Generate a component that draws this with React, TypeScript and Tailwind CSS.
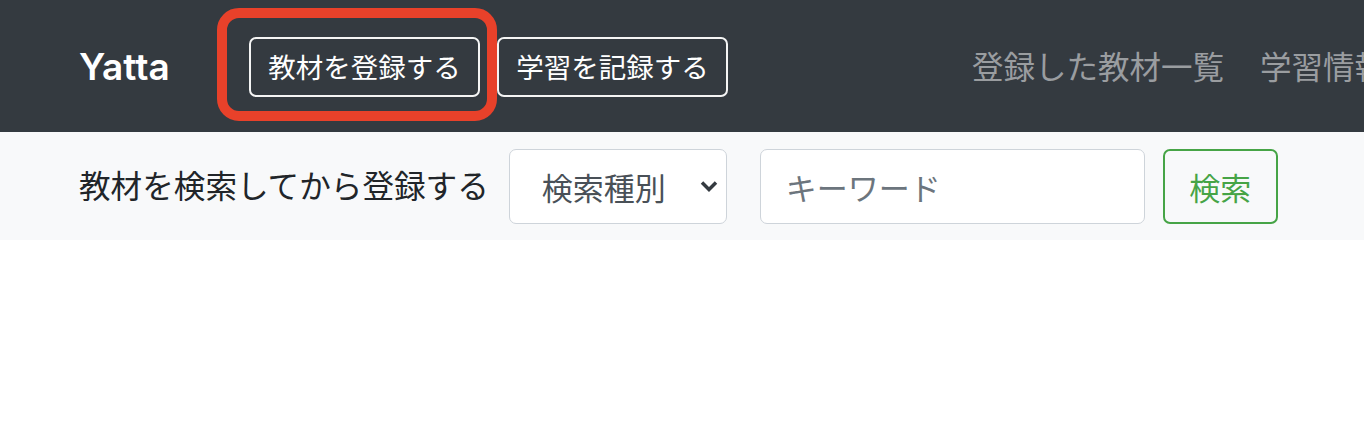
const jp = { fontFamily: '"Noto Sans CJK JP", "Noto Sans", sans-serif' };

function NavButton({ label }: { label: string }) {
  return (
    <button className="h-[60px] w-[231px] shrink-0 rounded-[7px] border-2 border-[#f4f4f4] text-[27.5px] text-white leading-none">
      {label}
    </button>
  );
}

export default function App() {
  return (
    <div className="min-h-[428px] bg-white" style={jp}>
      {/* navbar */}
      <nav className="relative flex h-[132px] items-center bg-[#343a40] pl-[79px] overflow-hidden">
        <span
          className="w-[138px] shrink-0 text-[37px] font-semibold text-white leading-none"
          style={{ fontFamily: 'Inter, "Liberation Sans", sans-serif' }}
        >
          Yatta
        </span>
        <div className="flex gap-[17px] pl-[32px] pt-[1px]">
          <NavButton label="教材を登録する" />
          <NavButton label="学習を記録する" />
        </div>
        <div className="ml-auto flex shrink-0 gap-[36px] pl-[244px] text-[31.5px] leading-none text-[#9a9da0] whitespace-nowrap">
          <a>登録した教材一覧</a>
          <a>学習情報</a>
        </div>
        {/* annotation highlight */}
        <div className="pointer-events-none absolute left-[217px] top-[8px] h-[113px] w-[280px] rounded-[22px] border-[10px] border-[#e8412a]" />
      </nav>

      {/* search bar */}
      <div className="flex h-[108px] items-center bg-[#f8f9fa] pl-[79px]">
        <span className="text-[31.6px] leading-none text-[#212529] pb-[2px]">教材を検索してから登録する</span>
        <div className="ml-[20px] flex h-[75px] w-[218px] items-center justify-between rounded-[7px] border-[1.5px] border-[#ced4da] bg-white pl-[32px] pr-[8px]">
          <span className="text-[31px] leading-none text-[#495057]">検索種別</span>
          <svg width="18" height="12" viewBox="0 0 18 12">
            <path d="M2 2.5 L9 9.5 L16 2.5" fill="none" stroke="#343a40" strokeWidth="3.5" />
          </svg>
        </div>
        <div className="ml-[33px] flex h-[75px] w-[385px] items-center rounded-[7px] border-[1.5px] border-[#ced4da] bg-white pl-[25px]">
          <span className="text-[31px] leading-none text-[#6c757d]">キーワード</span>
        </div>
        <button className="ml-[18px] flex h-[75px] w-[115px] items-center justify-center rounded-[7px] border-2 border-[#46a446] text-[31px] leading-none text-[#46a446]">
          検索
        </button>
      </div>
    </div>
  );
}
